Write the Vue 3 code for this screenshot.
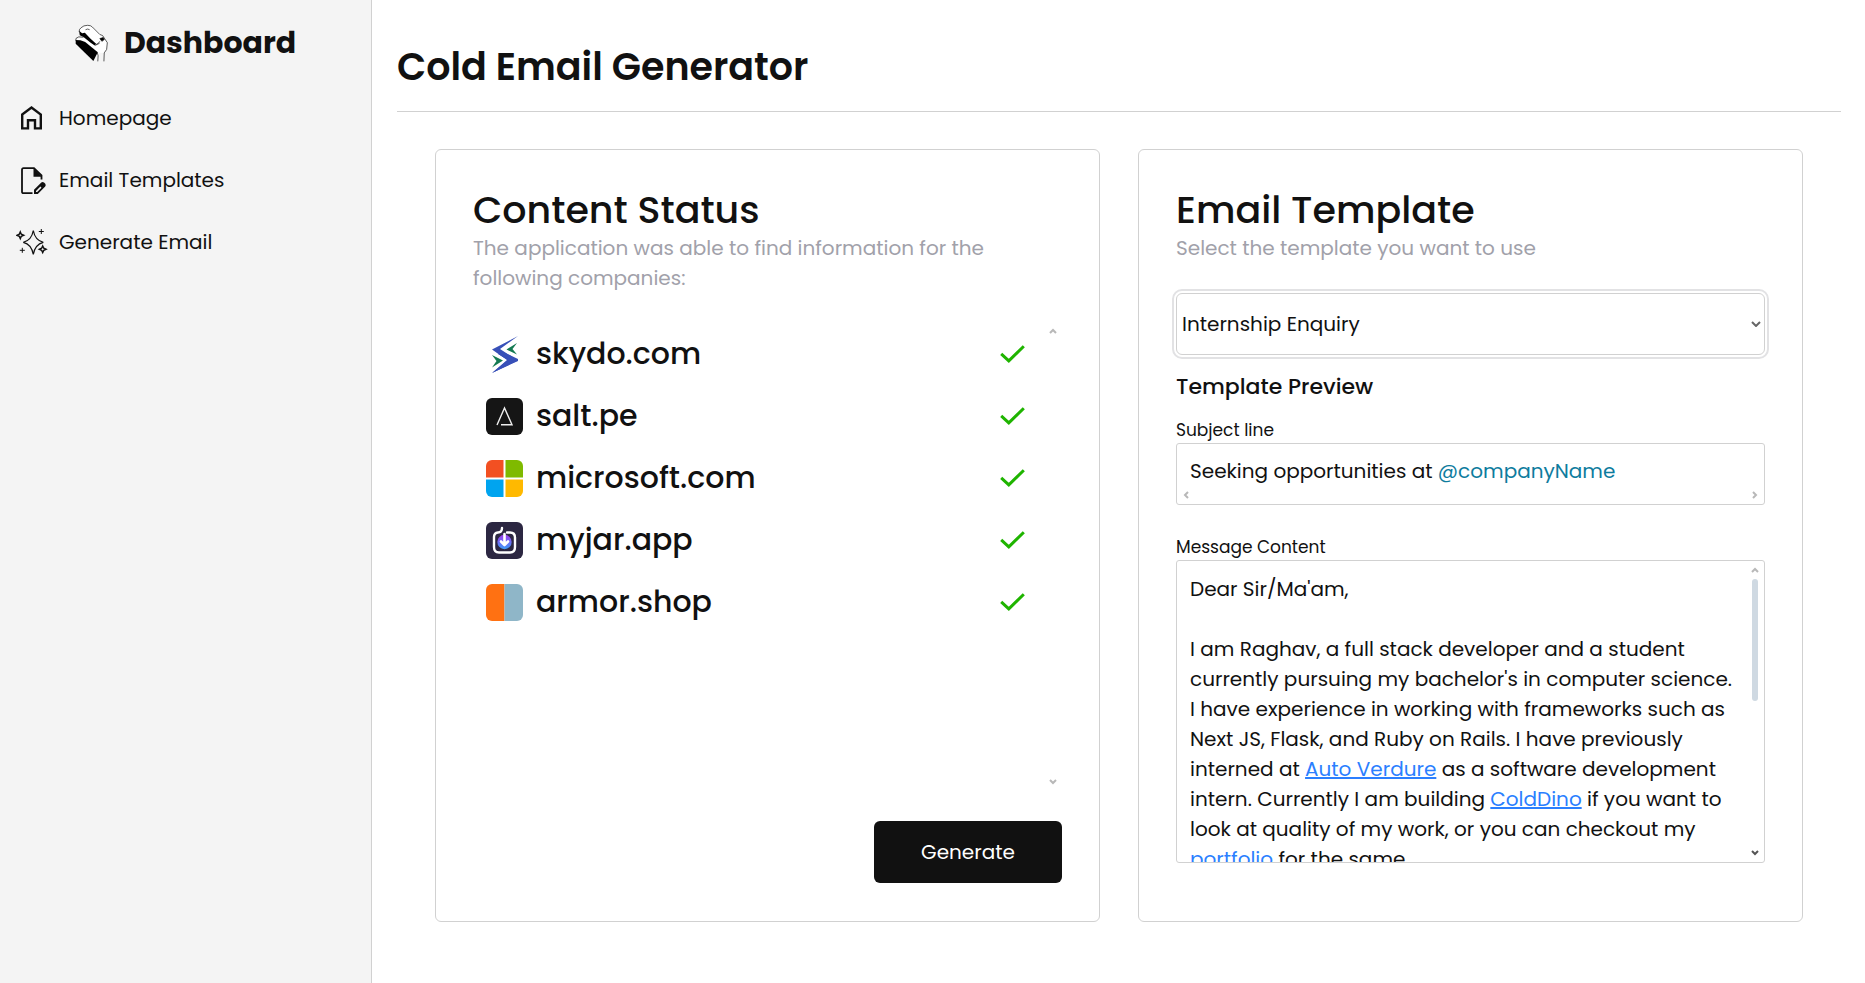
<script setup>
import { ref } from 'vue'

const navigation = [
  { label: 'Homepage', icon: 'home' },
  { label: 'Email Templates', icon: 'file' },
  { label: 'Generate Email', icon: 'sparkles' },
]

const companies = ['skydo.com', 'salt.pe', 'microsoft.com', 'myjar.app', 'armor.shop']

const template = ref('Internship Enquiry')
</script>

<template>
  <div class="app">
    <aside class="sidebar">
      <div class="brand">
        <svg class="brand-logo" viewBox="45 28 97 110" fill="none" stroke="#111" stroke-width="2" aria-hidden="true">
          <path fill="#fff" stroke="none" d="M60 44Q64 34 78 31L93 32L126 60L140 82L137 102L130 112L112 112L47 72L72 66L60 50Z" />
          <path d="M57 50Q57 42 63 38Q70 31 82 31Q92 31 96 36L118 58L126 61M76 44Q82 40 88 44" />
          <path d="M126 61L140 82L138 102L131 112L130 137M110 111L113 120L112 137M106 88Q116 84 118 78" />
          <path d="M47 76Q45 68 56 65L70 66M104 90L117 84" />
          <path fill="#000" stroke="none" d="M57 47L66 54L74 53L90 70L107 85L103 90L91 82L70 65L59 60Z" />
          <path fill="#000" stroke="none" d="M47 74L61 75L75 80L112 110L99 136L74 112L47 85Z" />
          <path fill="#000" d="M118 70L128 67L131 73L124 78Z" />
        </svg>
        <span>Dashboard</span>
      </div>
      <nav class="nav">
        <a v-for="item in navigation" :key="item.label" class="nav-link" href="#">
          <svg v-if="item.icon === 'home'" class="nav-icon" viewBox="0 0 32 32" fill="none" stroke="#111" stroke-width="2.4" aria-hidden="true">
            <path d="M6.2 12.5L15.5 5.6L24.8 12.5V26.4H19V18.2H12V26.4H6.2Z" />
          </svg>
          <svg v-else-if="item.icon === 'file'" class="nav-icon" viewBox="0 0 32 32" fill="none" stroke="#111" stroke-width="1.8" aria-hidden="true">
            <path d="M16.500 29.200H7.500Q6 29.200 6 27.700V5.700Q6 4.200 7.500 4.200H18L25.500 11.500V15.500" />
            <path fill="#111" stroke="none" d="M17.500 4L26 12.700H17.500Z" />
            <path fill="#111" stroke="none" d="M18 30V25.800L25.300 18.500Q26.600 17.500 28 18.500L29.300 19.800Q30.200 21.200 29.200 22.500L21.800 30ZM20 28L21.200 28L25.500 23.700L24.400 22.600L20 26.900Z" fill-rule="evenodd" />
          </svg>
          <svg v-else class="nav-icon" viewBox="0 0 32 32" fill="none" stroke="#111" stroke-width="1.200" aria-hidden="true">
            <path d="M17.300 4.500Q19 14.300 27.300 16.300Q19 18.300 17.300 28.500Q15.600 18.300 7.300 16.300Q15.600 14.300 17.300 4.500Z" />
            <path stroke-width="1.500" d="M4.300 6L5.300 8.300L7.600 9.300L5.300 10.300L4.300 12.600L3.300 10.300L1 9.300L3.300 8.300Z" />
            <path stroke-width="1.500" d="M26.700 20L27.800 22.300L30 23.300L27.800 24.300L26.700 26.600L25.600 24.300L23.400 23.300L25.600 22.300Z" />
            <path stroke-width="1" d="M25.300 3V8M22.800 5.500H27.800M6.300 21.800V26.800M3.800 24.300H8.800" />
          </svg>
          <span>{{ item.label }}</span>
        </a>
      </nav>
    </aside>

    <main class="main">
      <h1 class="page-title">Cold Email Generator</h1>

      <div class="cards">
        <section class="card">
          <h2 class="card-title">Content Status</h2>
          <p class="card-text">The application was able to find information for the following companies:</p>

          <div class="status">
            <ul class="companies">
              <li v-for="name in companies" :key="name" class="company">
                <svg v-if="name === 'skydo.com'" class="company-logo" viewBox="0 0 37 37" aria-hidden="true">
                  <path fill="#3850b8" d="M32 0L6 13.500L21 24L6 37L32 24.500L14 13Z" />
                  <path fill="#3850b8" d="M6 37L32 25V23L17 16L12 18L22 24Z" />
                  <path fill="#147a52" d="M31 7L20.500 13.500L31 18.500L26.500 13Z" />
                  <path fill="#147a52" d="M6 19L17 24.500L6 31.500L10.500 25Z" />
                </svg>
                <svg v-else-if="name === 'salt.pe'" class="company-logo" viewBox="0 0 37 37" aria-hidden="true">
                  <rect width="37" height="37" fill="#151515" />
                  <path fill="none" stroke="#eee" stroke-width="1.400" d="M15 26.700H26L18.500 10L11 27" />
                </svg>
                <svg v-else-if="name === 'microsoft.com'" class="company-logo" viewBox="0 0 37 37" aria-hidden="true">
                  <path fill="#f25022" d="M0 0H17.500V17.500H0Z" />
                  <path fill="#7fba00" d="M19.500 0H37V17.500H19.500Z" />
                  <path fill="#00a4ef" d="M0 19.500H17.500V37H0Z" />
                  <path fill="#ffb900" d="M19.500 19.500H37V37H19.500Z" />
                </svg>
                <svg v-else-if="name === 'myjar.app'" class="company-logo" viewBox="0 0 37 37" aria-hidden="true">
                  <defs>
                    <linearGradient id="jar-glow" x1="0" y1="0" x2="0" y2="1">
                      <stop offset="0" stop-color="#a03cf0" />
                      <stop offset="1" stop-color="#3c9cf8" />
                    </linearGradient>
                  </defs>
                  <rect width="37" height="37" fill="#2c2742" />
                  <circle cx="18.500" cy="20" r="7.200" fill="url(#jar-glow)" />
                  <path fill="none" stroke="#fff" stroke-width="2.400" stroke-linecap="round" stroke-linejoin="round" d="M21 10.500H24Q29 10.500 29 15.500V25Q29 30.500 24 30.500H13Q8 30.500 8 25V15Q8 11 12 10.500Q16 10.500 16 6" />
                  <path fill="none" stroke="#fff" stroke-width="2.600" stroke-linecap="round" stroke-linejoin="round" d="M18.500 12V22M15 19.500L18.500 23L22 19.500" />
                </svg>
                <svg v-else class="company-logo" viewBox="0 0 37 37" aria-hidden="true">
                  <path fill="#ff7112" d="M0 0H18.500V37H0Z" />
                  <path fill="#8fb6c8" d="M18.500 0H37V37H18.500Z" />
                </svg>
                <span class="company-name">{{ name }}</span>
                <svg class="check" viewBox="0 0 25 20" fill="none" stroke="#1fb400" stroke-width="3" aria-label="Found">
                  <path d="M1.200 9.800L8.800 16.900L23.800 2.200" />
                </svg>
              </li>
            </ul>
            <div class="scrollbar" aria-hidden="true">
              <svg class="arrow" viewBox="0 0 8 8"><path d="M1 6L4 3L7 6" /></svg>
              <svg class="arrow" viewBox="0 0 8 8"><path d="M1 2L4 5L7 2" /></svg>
            </div>
          </div>

          <button class="generate" type="button">Generate</button>
        </section>

        <section class="card">
          <h2 class="card-title">Email Template</h2>
          <p class="card-text">Select the template you want to use</p>

          <div class="select-wrap">
            <select v-model="template" class="select" aria-label="Email template">
              <option>Internship Enquiry</option>
            </select>
            <svg class="chevron" viewBox="0 0 10 6" aria-hidden="true"><path d="M1 1L5 5L9 1" /></svg>
          </div>

          <h3 class="preview-title">Template Preview</h3>

          <h4 id="subject-label" class="label">Subject line</h4>
          <div class="subject" role="region" aria-labelledby="subject-label">
            <p class="subject-text">Seeking opportunities at <span class="variable">@companyName</span></p>
            <div class="scrollbar horizontal" aria-hidden="true">
              <svg class="arrow" viewBox="0 0 8 8"><path d="M6 1L3 4L6 7" /></svg>
              <svg class="arrow" viewBox="0 0 8 8"><path d="M2 1L5 4L2 7" /></svg>
            </div>
          </div>

          <h4 id="message-label" class="label">Message Content</h4>
          <div class="message" role="region" aria-labelledby="message-label">
            <div class="message-text">
              <p>Dear Sir/Ma'am,</p>
              <p>
                I am Raghav, a full stack developer and a student currently pursuing my bachelor's in computer
                science. I have experience in working with frameworks such as Next JS, Flask, and Ruby on Rails. I
                have previously interned at <a href="#">Auto Verdure</a> as a software development intern. Currently
                I am building <a href="#">ColdDino</a> if you want to look at quality of my work, or you can checkout
                my <a href="#">portfolio</a> for the same.
              </p>
            </div>
            <div class="scrollbar" aria-hidden="true">
              <svg class="arrow" viewBox="0 0 8 8"><path d="M1 6L4 3L7 6" /></svg>
              <span class="thumb"></span>
              <svg class="arrow active" viewBox="0 0 8 8"><path d="M1 2L4 5L7 2" /></svg>
            </div>
          </div>
        </section>
      </div>
    </main>
  </div>
</template>

<style>
body {
  margin: 0;
  background: #fff;
}
</style>

<style scoped>
.app {
  display: flex;
  min-height: 100vh;
  color: #111;
  font-family: Poppins, Inter, sans-serif;
  font-size: 20px;
  line-height: 30px;
}

.app *,
.app {
  box-sizing: border-box;
}

h1, h2, h3, h4, p, ul {
  margin: 0;
  padding: 0;
}

/* Sidebar */
.sidebar {
  flex: 0 0 372px;
  border-right: 1px solid #d1d1d1;
  background: #f4f4f4;
}

.brand {
  display: flex;
  align-items: center;
  justify-content: center;
  gap: 16px;
  padding: 21px 0 22px;
  font-size: 30px;
  font-weight: 700;
  line-height: 44px;
}

.brand-logo {
  width: 33px;
  height: 38px;
}

.nav {
  display: flex;
  flex-direction: column;
}

.nav-link {
  display: flex;
  align-items: center;
  gap: 11px;
  height: 62px;
  padding-left: 16px;
  color: inherit;
  text-decoration: none;
}

.nav-icon {
  width: 32px;
  height: 32px;
}

/* Main area */
.main {
  flex: 1;
  min-width: 0;
  padding: 0 24px 0 25px;
}

.page-title {
  padding: 38px 0 15px;
  border-bottom: 1px solid #d1d1d1;
  font-size: 38px;
  font-weight: 600;
  line-height: 58px;
}

.cards {
  display: grid;
  grid-template-columns: 1fr 1fr;
  gap: 38px;
  padding: 37px 38px 60px;
}

.card {
  display: flex;
  flex-direction: column;
  min-width: 0;
  padding: 37px 37px 38px;
  border: 1px solid #d1d1d1;
  border-radius: 6px;
}

.card-title {
  font-size: 38px;
  font-weight: 500;
  line-height: 46px;
}

.card-text {
  color: #a1a1aa;
}

.status {
  display: flex;
  flex: 1;
  min-height: 469px;
  margin: 29px 0 30px;
}

.companies {
  flex: 1;
  padding: 1px 0 0 13px;
  list-style: none;
}

.company {
  display: flex;
  align-items: center;
  gap: 13px;
  height: 62px;
}

.company-logo {
  width: 37px;
  height: 37px;
  border-radius: 6px;
}

.company-name {
  flex: 1;
  font-size: 30px;
  font-weight: 500;
  line-height: 44px;
}

.check {
  width: 25px;
  height: 20px;
  margin-right: 19px;
}

.scrollbar {
  display: flex;
  flex-direction: column;
  align-items: center;
  flex: 0 0 18px;
  padding: 5px 0;
}

.horizontal {
  flex-direction: row;
  justify-content: space-between;
  padding: 0 5px;
}

.arrow {
  width: 8px;
  height: 8px;
  fill: none;
  stroke: #b8b8b8;
  stroke-width: 2;
}

.arrow.active {
  stroke: #555;
}

.scrollbar .arrow:last-child {
  margin-top: auto;
}

.horizontal .arrow:last-child {
  margin-top: 0;
}

.thumb {
  width: 6px;
  height: 122px;
  margin-top: 5px;
  border-radius: 3px;
  background: #cfd9e2;
}

.generate {
  align-self: flex-end;
  width: 188px;
  height: 62px;
  border: 0;
  border-radius: 6px;
  background: #111;
  color: #fff;
  font: inherit;
}

/* Template preview */
.select-wrap {
  position: relative;
  margin-top: 30px;
}

.select {
  display: block;
  width: 100%;
  height: 62px;
  padding: 0 5px;
  border: 1px solid #d1d1d1;
  border-radius: 6px;
  outline: 2px solid #e2e2e4;
  outline-offset: 2px;
  background: #fff;
  color: inherit;
  font: inherit;
  appearance: none;
}

.chevron {
  position: absolute;
  top: 28px;
  right: 4px;
  width: 10px;
  height: 6px;
  fill: none;
  stroke: #666;
  stroke-width: 2;
  pointer-events: none;
}

.preview-title {
  margin-top: 15px;
  font-size: 22px;
  font-weight: 500;
  line-height: 34px;
}

.label {
  margin-top: 13px;
  font-size: 17px;
  font-weight: 400;
  line-height: 26px;
}

.subject,
.message {
  display: flex;
  border: 1px solid #d1d1d1;
  border-radius: 3px;
}

.subject {
  flex-direction: column;
  height: 62px;
}

.subject-text {
  flex: 1;
  padding: 12px 13px 0;
  white-space: nowrap;
}

.subject + .label {
  margin-top: 29px;
}

.variable {
  color: #0e7c9e;
}

.message {
  height: 303px;
  overflow: hidden;
}

.message-text {
  flex: 1;
  padding: 13px 9px 0 13px;
}

.message-text p + p {
  margin-top: 30px;
}

.message-text a {
  color: #2b7fff;
  text-decoration: underline;
}
</style>
